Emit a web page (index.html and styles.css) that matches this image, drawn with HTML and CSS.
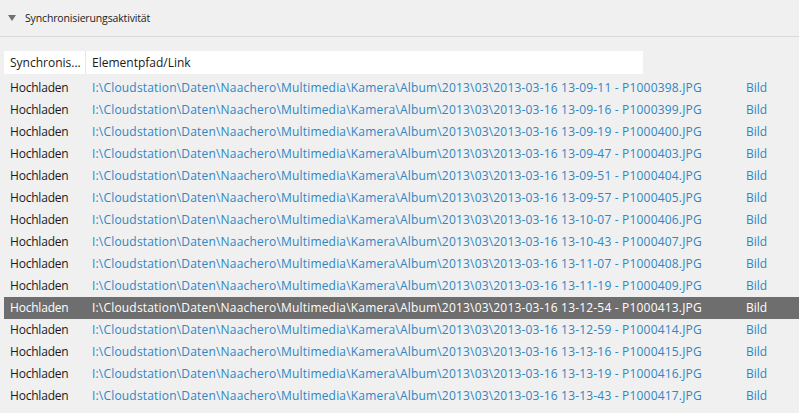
FILE: index.html
```html
<!DOCTYPE html>
<html lang="de">
<head>
<meta charset="utf-8">
<title>Synchronisierungsaktivität</title>
<link rel="stylesheet" href="styles.css">
</head>
<body>
<div class="panel">
  <div class="section-head">
    <span class="tri"></span>
    <span class="section-title">Synchronisierungsaktivität</span>
  </div>
  <div class="table">
    <div class="thead">
      <div class="th c1">Synchronis...</div>
      <div class="th c2">Elementpfad/Link</div>
    </div>
    <div class="row"><div class="c1">Hochladen</div><div class="c2 link path">I:\Cloudstation\Daten\Naachero\Multimedia\Kamera\Album\2013\03\2013-03-16 13-09-11 - P1000398.JPG</div><div class="c3 link">Bild</div></div>
    <div class="row"><div class="c1">Hochladen</div><div class="c2 link path">I:\Cloudstation\Daten\Naachero\Multimedia\Kamera\Album\2013\03\2013-03-16 13-09-16 - P1000399.JPG</div><div class="c3 link">Bild</div></div>
    <div class="row"><div class="c1">Hochladen</div><div class="c2 link path">I:\Cloudstation\Daten\Naachero\Multimedia\Kamera\Album\2013\03\2013-03-16 13-09-19 - P1000400.JPG</div><div class="c3 link">Bild</div></div>
    <div class="row"><div class="c1">Hochladen</div><div class="c2 link path">I:\Cloudstation\Daten\Naachero\Multimedia\Kamera\Album\2013\03\2013-03-16 13-09-47 - P1000403.JPG</div><div class="c3 link">Bild</div></div>
    <div class="row"><div class="c1">Hochladen</div><div class="c2 link path">I:\Cloudstation\Daten\Naachero\Multimedia\Kamera\Album\2013\03\2013-03-16 13-09-51 - P1000404.JPG</div><div class="c3 link">Bild</div></div>
    <div class="row"><div class="c1">Hochladen</div><div class="c2 link path">I:\Cloudstation\Daten\Naachero\Multimedia\Kamera\Album\2013\03\2013-03-16 13-09-57 - P1000405.JPG</div><div class="c3 link">Bild</div></div>
    <div class="row"><div class="c1">Hochladen</div><div class="c2 link path">I:\Cloudstation\Daten\Naachero\Multimedia\Kamera\Album\2013\03\2013-03-16 13-10-07 - P1000406.JPG</div><div class="c3 link">Bild</div></div>
    <div class="row"><div class="c1">Hochladen</div><div class="c2 link path">I:\Cloudstation\Daten\Naachero\Multimedia\Kamera\Album\2013\03\2013-03-16 13-10-43 - P1000407.JPG</div><div class="c3 link">Bild</div></div>
    <div class="row"><div class="c1">Hochladen</div><div class="c2 link path">I:\Cloudstation\Daten\Naachero\Multimedia\Kamera\Album\2013\03\2013-03-16 13-11-07 - P1000408.JPG</div><div class="c3 link">Bild</div></div>
    <div class="row"><div class="c1">Hochladen</div><div class="c2 link path">I:\Cloudstation\Daten\Naachero\Multimedia\Kamera\Album\2013\03\2013-03-16 13-11-19 - P1000409.JPG</div><div class="c3 link">Bild</div></div>
    <div class="row selected"><div class="c1">Hochladen</div><div class="c2 link path">I:\Cloudstation\Daten\Naachero\Multimedia\Kamera\Album\2013\03\2013-03-16 13-12-54 - P1000413.JPG</div><div class="c3 link">Bild</div></div>
    <div class="row"><div class="c1">Hochladen</div><div class="c2 link path">I:\Cloudstation\Daten\Naachero\Multimedia\Kamera\Album\2013\03\2013-03-16 13-12-59 - P1000414.JPG</div><div class="c3 link">Bild</div></div>
    <div class="row"><div class="c1">Hochladen</div><div class="c2 link path">I:\Cloudstation\Daten\Naachero\Multimedia\Kamera\Album\2013\03\2013-03-16 13-13-16 - P1000415.JPG</div><div class="c3 link">Bild</div></div>
    <div class="row"><div class="c1">Hochladen</div><div class="c2 link path">I:\Cloudstation\Daten\Naachero\Multimedia\Kamera\Album\2013\03\2013-03-16 13-13-19 - P1000416.JPG</div><div class="c3 link">Bild</div></div>
    <div class="row"><div class="c1">Hochladen</div><div class="c2 link path">I:\Cloudstation\Daten\Naachero\Multimedia\Kamera\Album\2013\03\2013-03-16 13-13-43 - P1000417.JPG</div><div class="c3 link">Bild</div></div>
  </div>
</div>
</body>
</html>
```

FILE: styles.css
```css
html, body {
  margin: 0;
  padding: 0;
  background: #f0f0f0;
  overflow: hidden;
}
body {
  font-family: "Open Sans", "Noto Sans", "DejaVu Sans", sans-serif;
  color: #1a1a1a;
}
.panel {
  width: 799px;
  height: 413px;
}
.section-head {
  display: flex;
  align-items: center;
  height: 37px;
  padding-left: 8px;
  box-sizing: border-box;
  border-bottom: 1px solid #d9d9d9;
  font-size: 10.5px;
  letter-spacing: -0.15px;
}
.tri {
  width: 0;
  height: 0;
  border-left: 4px solid transparent;
  border-right: 4px solid transparent;
  border-top: 6px solid #707070;
  margin-right: 9px;
}
.section-title {
  color: #222;
}
.table {
  margin-top: 14px;
  padding-left: 4px;
}
.thead {
  display: flex;
  width: 639px;
  height: 23px;
  background: #fff;
  font-size: 12px;
  line-height: 23px;
  margin-bottom: 3px;
}
.th.c1 {
  width: 82px;
  box-sizing: border-box;
  padding-left: 6px;
  border-right: 1px solid #e6e6e6;
}
.th.c2 {
  padding-left: 6px;
}
.row {
  display: flex;
  height: 22px;
  line-height: 22px;
  font-size: 12px;
  white-space: nowrap;
}
.row .c1 {
  width: 82px;
  box-sizing: border-box;
  padding-left: 6px;
  flex: none;
  letter-spacing: -0.2px;
}
.row .c2 {
  width: 654px;
  box-sizing: border-box;
  padding-left: 6px;
  flex: none;
}
.path {
  letter-spacing: 0.185px;
}
.row .c3 {
  padding-left: 6px;
  flex: 1;
}
.link {
  color: #2f86c4;
}
.row.selected {
  background: #6e6e6e;
  color: #fff;
}
.row.selected .link {
  color: #fff;
}
```
